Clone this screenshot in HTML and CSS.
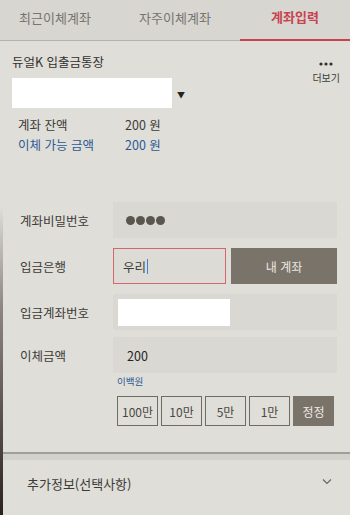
FILE: index.html
```html
<!DOCTYPE html>
<html lang="ko">
<head>
    <meta charset="UTF-8">
    <meta name="viewport" content="width=device-width, initial-scale=1.0">
    <title>계좌입력</title>
    <link rel="stylesheet" href="styles.css">
</head>
<body>
    <div class="screen">
        <div class="tabs">
            <div class="tab tab-recent">최근이체계좌</div>
            <div class="tab tab-often">자주이체계좌</div>
            <div class="tab tab-input active">계좌입력</div>
        </div>

        <div class="account">
            <div class="account-head">
                <div class="account-name">듀얼K 입출금통장</div>
                <div class="more">
                    <svg class="more-dots" width="14" height="4" viewBox="0 0 14 4">
                        <circle cx="2" cy="2" r="1.6" fill="#33312e"/>
                        <circle cx="7" cy="2" r="1.6" fill="#33312e"/>
                        <circle cx="12" cy="2" r="1.6" fill="#33312e"/>
                    </svg>
                    <span class="more-label">더보기</span>
                </div>
            </div>
            <div class="account-select">
                <div class="select-box"></div>
                <span class="select-arrow">&#9660;</span>
            </div>
            <div class="balance-row">
                <span class="balance-label">계좌 잔액</span>
                <span class="balance-value">200 원</span>
            </div>
            <div class="balance-row available">
                <span class="balance-label">이체 가능 금액</span>
                <span class="balance-value">200 원</span>
            </div>
        </div>

        <div class="form">
            <div class="form-row">
                <div class="label">계좌비밀번호</div>
                <div class="field password">
                    <span class="dot"></span><span class="dot"></span><span class="dot"></span><span class="dot"></span>
                </div>
            </div>
            <div class="form-row">
                <div class="label">입금은행</div>
                <div class="bank">
                    <div class="bank-input">우리<span class="caret"></span></div>
                    <button class="my-account">내 계좌</button>
                </div>
            </div>
            <div class="form-row">
                <div class="label">입금계좌번호</div>
                <div class="field account-no">
                    <div class="account-no-box"></div>
                </div>
            </div>
            <div class="form-row amount-row">
                <div class="label">이체금액</div>
                <div class="field amount">200</div>
            </div>
            <div class="amount-hint">이백원</div>
            <div class="quick">
                <button class="quick-btn">100만</button>
                <button class="quick-btn">10만</button>
                <button class="quick-btn">5만</button>
                <button class="quick-btn">1만</button>
                <button class="quick-btn fix">정정</button>
            </div>
        </div>

        <div class="divider"></div>

        <div class="extra">
            <span class="extra-title">추가정보(선택사항)</span>
            <svg class="chevron" width="10" height="7" viewBox="0 0 10 7">
                <path d="M1 1.5 L5 5.5 L9 1.5" fill="none" stroke="#6b6862" stroke-width="1.2"/>
            </svg>
        </div>
    </div>
</body>
</html>
```

FILE: styles.css
```css
* {
    box-sizing: border-box;
    margin: 0;
    padding: 0;
}

body {
    font-family: "Noto Sans CJK KR", "Noto Sans", sans-serif;
    background-color: #dfded9;
    color: #3d3b37;
    width: 350px;
    height: 515px;
    overflow: hidden;
}

.screen {
    height: 515px;
    display: flex;
    flex-direction: column;
    border-left: 3px solid transparent;
    border-image: linear-gradient(to bottom, #dfded9 0%, #dfded9 40%, #8c8580 60%, #2b2220 100%) 1;
}

/* tabs */
.tabs {
    display: flex;
    height: 41px;
    background-color: #d7d6d1;
    border-bottom: 1px solid #b3b2ad;
    margin-left: -3px;
}

.tab {
    font-size: 13px;
    color: #77746f;
    display: flex;
    align-items: center;
    justify-content: center;
    padding-bottom: 6px;
}

.tab-recent {
    width: 110px;
}

.tab-often {
    width: 130px;
}

.tab-input {
    width: 110px;
}

.tab.active {
    color: #c9434e;
    font-weight: bold;
    border-bottom: 2px solid #c9434e;
    margin-bottom: -1px;
}

/* account */
.account {
    padding: 13px 10px 0 9px;
    height: 130px;
}

.account-head {
    display: flex;
    justify-content: space-between;
    align-items: flex-start;
}

.account-name {
    font-size: 12.5px;
    line-height: 16px;
    color: #33312e;
}

.more {
    display: flex;
    flex-direction: column;
    align-items: center;
    gap: 6px;
    padding-top: 8px;
}

.more-label {
    font-size: 10px;
    line-height: 12px;
    color: #3d3b37;
}

.account-select {
    display: flex;
    align-items: center;
    margin-top: -6px;
}

.select-box {
    width: 160px;
    height: 30px;
    background-color: #ffffff;
}

.select-arrow {
    font-size: 8px;
    color: #26231f;
    margin-left: 5px;
    margin-top: 2px;
}

.balance-row {
    display: flex;
    font-size: 12.5px;
    line-height: 20px;
    padding-left: 6px;
}

.account-select + .balance-row {
    margin-top: 7px;
}

.balance-label {
    width: 107px;
}

.available {
    color: #2e5a93;
}

/* form */
.form {
    padding: 31px 13px 0 0;
    height: 281px;
}

.form-row {
    display: flex;
    align-items: center;
    height: 36px;
    margin-bottom: 10px;
}

.label {
    width: 110px;
    padding-left: 17px;
    font-size: 12.5px;
    color: #3d3b37;
}

.field {
    flex: 1;
    height: 36px;
    background-color: #d9d8d2;
    display: flex;
    align-items: center;
    padding-left: 13px;
}

.password {
    gap: 1px;
}

.dot {
    width: 9px;
    height: 9px;
    border-radius: 50%;
    background-color: #5a554e;
}

.bank {
    flex: 1;
    display: flex;
    gap: 5px;
}

.bank-input {
    width: 113px;
    height: 36px;
    border: 1px solid #d4676d;
    background-color: #dcdbd6;
    font-size: 12.5px;
    display: flex;
    align-items: center;
    padding-left: 9px;
    color: #3d3b37;
}

.caret {
    width: 1px;
    height: 15px;
    background-color: #4a7bd0;
    margin-left: 1px;
}

.my-account {
    flex: 1;
    height: 36px;
    border: none;
    background-color: #7a7369;
    color: #ece9e3;
    font-family: inherit;
    font-size: 12px;
}

.account-no {
    padding-left: 5px;
}

.account-no-box {
    width: 112px;
    height: 27px;
    background-color: #ffffff;
}

.amount-row {
    margin-top: -3px;
    margin-bottom: 1px;
}

.amount {
    font-size: 12.5px;
    color: #26231f;
    padding-left: 14px;
}

.amount-hint {
    font-size: 9.5px;
    color: #2e5a93;
    margin-left: 114px;
    line-height: 14px;
}

.quick {
    display: flex;
    gap: 3px;
    margin-left: 114px;
    margin-top: 8px;
}

.quick-btn {
    width: 41px;
    height: 30px;
    border: 1px solid #6f6b65;
    background-color: #dfded9;
    color: #4a4742;
    font-family: inherit;
    font-size: 12px;
}

.quick-btn.fix {
    background-color: #7a7369;
    border-color: #7a7369;
    color: #ece9e3;
}

/* divider */
.divider {
    height: 8px;
    background-color: #d2d1cc;
    border-top: 2px solid #9f9e99;
}

.extra {
    flex: 1;
    display: flex;
    justify-content: space-between;
    align-items: center;
    padding: 0 18px 8px 24px;
}

.extra-title {
    font-size: 13px;
    color: #3d3b37;
}

.chevron {
    margin-top: -4px;
}
```
